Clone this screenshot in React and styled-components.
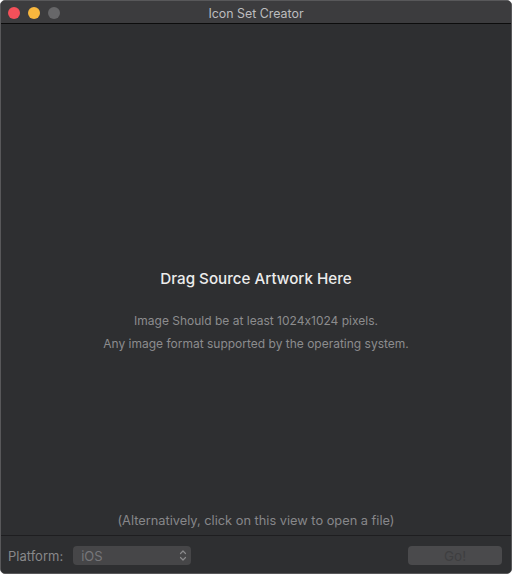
import React from 'react';
import styled, { createGlobalStyle } from 'styled-components';

const GlobalStyle = createGlobalStyle`
  html, body {
    margin: 0;
    padding: 0;
    background: #ffffff;
  }
  body {
    font-family: Inter, "Noto Sans", "Liberation Sans", sans-serif;
    font-feature-settings: "calt" 0;
    -webkit-font-smoothing: antialiased;
  }
`

const StyledWindow = styled.div`
  width: 512px;
  height: 574px;
  box-sizing: border-box;
  display: flex;
  flex-direction: column;
  background: #2e2f31;
  border: 1px solid #58585a;
  border-radius: 5px;
  overflow: hidden;
`

const StyledTitleBar = styled.div`
  position: relative;
  height: 23px;
  flex-shrink: 0;
  display: flex;
  align-items: center;
  justify-content: center;
  padding-top: 2px;
  box-sizing: border-box;
  background: #3c3c3e;
  border-bottom: 1px solid #0c0c0c;
`

const StyledLights = styled.div`
  position: absolute;
  left: 7px;
  top: 6px;
  display: flex;
  gap: 8px;
`

const StyledLight = styled.span`
  width: 12px;
  height: 12px;
  border-radius: 50%;
  background: ${props => props.color};
`

const StyledTitle = styled.div`
  font-size: 12.4px;
  color: #bdbdbf;
`

const StyledDropArea = styled.div`
  flex: 1;
  display: flex;
  flex-direction: column;
  align-items: center;
  padding-top: 245px;
  cursor: pointer;
`

const StyledHeading = styled.div`
  font-size: 15.2px;
  font-weight: 500;
  color: #ececec;
  margin-bottom: 21px;
`

const StyledHint = styled.div`
  font-size: 12px;
  color: #8c8c8e;
  line-height: 23px;
`

const StyledAlternative = styled.div`
  margin-top: auto;
  margin-bottom: 7px;
  font-size: 12.8px;
  color: #87878a;
`

const StyledFooter = styled.div`
  flex-shrink: 0;
  height: 38px;
  box-sizing: border-box;
  display: flex;
  align-items: center;
  padding: 2px 9px 0 7px;
  border-top: 1px solid #1e1e20;
  background: #2e2f31;
`

const StyledLabel = styled.div`
  font-size: 13px;
  color: #88888a;
  margin-right: 10px;
`

const StyledPopup = styled.div`
  width: 118px;
  height: 19px;
  box-sizing: border-box;
  display: flex;
  align-items: center;
  justify-content: space-between;
  padding: 0 4px 0 8px;
  border-radius: 4px;
  background: #464648;
  font-size: 13px;
  color: #76767a;
`

const StyledGo = styled.div`
  margin-left: auto;
  width: 94px;
  height: 19px;
  display: flex;
  align-items: center;
  justify-content: center;
  border-radius: 4px;
  background: #4a4a4c;
  font-size: 13.5px;
  color: #3e3e40;
`

function Chevrons() {
  return (
    <svg width="8" height="13" viewBox="0 0 8 13" fill="none" stroke="#8a8a8c" strokeWidth="1.2" strokeLinecap="round" strokeLinejoin="round">
      <path d="M1.5 4.5 L4 2 L6.5 4.5" />
      <path d="M1.5 8.5 L4 11 L6.5 8.5" />
    </svg>
  );
}

function App() {
  return (
    <>
      <GlobalStyle />
      <StyledWindow>
        <StyledTitleBar>
          <StyledLights>
            <StyledLight color="#f4505a" />
            <StyledLight color="#f8b73e" />
            <StyledLight color="#676769" />
          </StyledLights>
          <StyledTitle>Icon Set Creator</StyledTitle>
        </StyledTitleBar>
        <StyledDropArea>
          <StyledHeading>Drag Source Artwork Here</StyledHeading>
          <StyledHint>Image Should be at least 1024x1024 pixels.</StyledHint>
          <StyledHint>Any image format supported by the operating system.</StyledHint>
          <StyledAlternative>(Alternatively, click on this view to open a file)</StyledAlternative>
        </StyledDropArea>
        <StyledFooter>
          <StyledLabel>Platform:</StyledLabel>
          <StyledPopup>
            <span>iOS</span>
            <Chevrons />
          </StyledPopup>
          <StyledGo>Go!</StyledGo>
        </StyledFooter>
      </StyledWindow>
    </>
  );
}

export default App;
